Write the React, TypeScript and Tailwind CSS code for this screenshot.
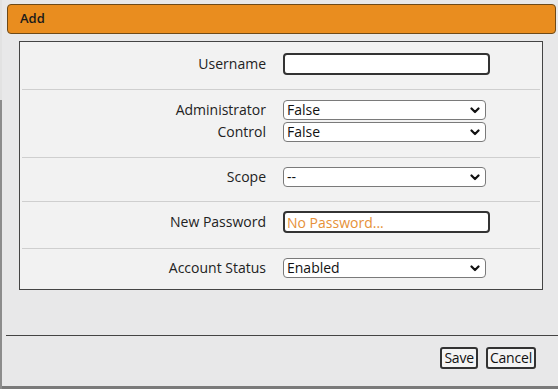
import React from "react";

const font = "font-['Open_Sans','Noto_Sans',sans-serif]";

function Chevron() {
  return (
    <svg className="w-[10px] h-[7px]" viewBox="0 0 10 7" fill="none">
      <path d="M1.5 1.5 L5 5 L8.5 1.5" stroke="#111" strokeWidth={2.2} strokeLinecap="round" strokeLinejoin="round" />
    </svg>
  );
}

function Select({ value }: { value: string }) {
  return (
    <div className="relative w-[203px] h-[20px]">
      <select
        defaultValue={value}
        className={`block appearance-none w-full h-full bg-white border border-[#7a7a7a] rounded-[4px] pl-[3px] py-0 text-[14px] leading-[18px] text-[#111] outline-none ${font}`}
      >
        <option>{value}</option>
      </select>
      {/* arrow sits over the select */}
      <span className="pointer-events-none absolute right-[6px] top-[7px] flex">
        <Chevron />
      </span>
    </div>
  );
}

function TextInput({ placeholder }: { placeholder?: string }) {
  return (
    <input
      placeholder={placeholder}
      className={`block w-[207px] h-[22px] bg-white border-2 border-[#333] rounded-[4px] px-[2px] text-[14px] text-[#111] placeholder:text-[#e69138] outline-none ${font}`}
    />
  );
}

function Line({ label, children }: { label: string; children: React.ReactNode }) {
  return (
    <div className="grid grid-cols-[244px_1fr] items-center">
      <span className="text-right text-[14px] text-[#222] leading-[18px]">{label}</span>
      <div className="pl-[17px] flex">{children}</div>
    </div>
  );
}

export default function App() {
  return (
    <div className={`w-[558px] h-[389px] bg-[#e8e8e9] flex overflow-hidden ${font}`}>
      {/* left edge of the dialog */}
      <div className="w-[2px] flex flex-col">
        <div className="h-[100px] bg-[#e2e2e2]" />
        <div className="flex-1 bg-[#8c8c8c]" />
      </div>

      <div className="flex-1 flex flex-col pl-[5px] pr-[2px] pt-[4px] border-b-[3px] border-[#7a7a7a]">
        {/* Header */}
        <div className="h-[30px] bg-[#e98d1f] border border-[#6e4a18] rounded-[4px] flex items-center pl-[12px]">
          <span className="text-[13px] font-semibold text-[#1a1a1a]">Add</span>
        </div>

        {/* Form */}
        <div className="mt-[7px] ml-[12px] mr-[13px] bg-[#f2f2f2] border border-[#444]">
          <div className="mx-[2px] h-[48px] pt-[11px] border-b border-[#cfcfcf]">
            <Line label="Username">
              <TextInput />
            </Line>
          </div>
          <div className="mx-[2px] h-[68px] pt-[10px] border-b border-[#cfcfcf] flex flex-col gap-[2px]">
            <Line label="Administrator">
              <Select value="False" />
            </Line>
            <Line label="Control">
              <Select value="False" />
            </Line>
          </div>
          <div className="mx-[2px] h-[44px] pt-[9px] border-b border-[#cfcfcf]">
            <Line label="Scope">
              <Select value="--" />
            </Line>
          </div>
          <div className="mx-[2px] h-[47px] pt-[9px] border-b border-[#cfcfcf]">
            <Line label="New Password">
              <TextInput placeholder="No Password..." />
            </Line>
          </div>
          <div className="mx-[2px] h-[40px] pt-[9px]">
            <Line label="Account Status">
              <Select value="Enabled" />
            </Line>
          </div>
        </div>

        {/* Footer */}
        <div className="mt-[45px] -ml-[1px] -mr-[2px] border-t border-[#444] flex justify-end gap-[8px] pt-[11px] pr-[22px]">
          <button className="h-[22px] px-[2px] bg-[#f4f4f4] border-2 border-[#333] rounded-[3px] text-[14px] leading-[16px] text-[#111] tracking-[-0.2px]">
            Save
          </button>
          <button className="h-[22px] px-[2px] bg-[#f4f4f4] border-2 border-[#333] rounded-[3px] text-[14px] leading-[16px] text-[#111] tracking-[-0.2px]">
            Cancel
          </button>
        </div>
      </div>
    </div>
  );
}
